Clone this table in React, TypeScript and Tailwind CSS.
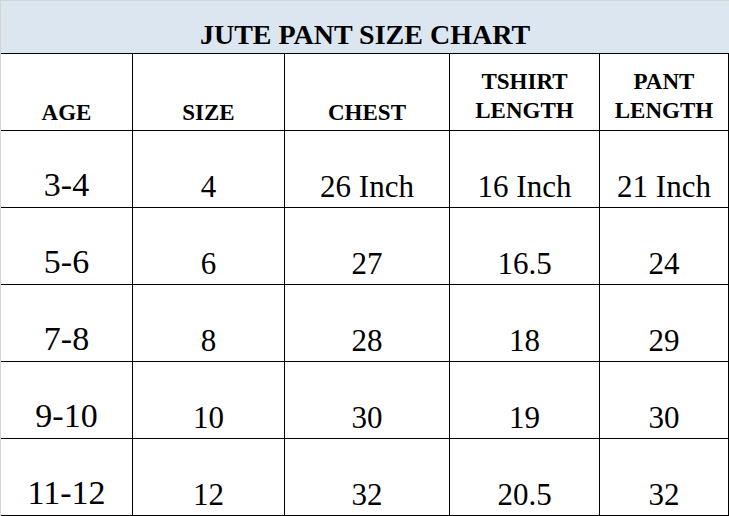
import React from 'react';

const rows = [
  ['3-4', '4', '26 Inch', '16 Inch', '21 Inch'],
  ['5-6', '6', '27', '16.5', '24'],
  ['7-8', '8', '28', '18', '29'],
  ['9-10', '10', '30', '19', '30'],
  ['11-12', '12', '32', '20.5', '32'],
];

const App = () => {
  return (
    <div
      className="w-[729px] h-[516px] bg-white text-black border-l border-t border-[#d4d4d4]"
      style={{ fontFamily: '"Liberation Serif", "Times New Roman", serif' }}
    >
      {/* Title band */}
      <div className="h-[53px] bg-[#dce6f1] border-b border-black flex items-end justify-center pb-[4px]">
        <span className="text-[28px] font-bold leading-none">JUTE PANT SIZE CHART</span>
      </div>

      <div className="grid grid-cols-[132px_152px_165px_150px_129px]">
        {/* Header row */}
        <div className="h-[77px] border-r border-b border-black flex items-end justify-center pb-[6px]">
          <span className="text-[23px] font-bold leading-none">AGE</span>
        </div>
        <div className="h-[77px] border-r border-b border-black flex items-end justify-center pb-[6px]">
          <span className="text-[23px] font-bold leading-none">SIZE</span>
        </div>
        <div className="h-[77px] border-r border-b border-black flex items-end justify-center pb-[6px]">
          <span className="text-[23px] font-bold leading-none">CHEST</span>
        </div>
        <div className="h-[77px] border-r border-b border-black flex items-end justify-center pb-[5px]">
          <span className="text-[23px] font-bold leading-[29px] text-center">
            TSHIRT
            <br />
            LENGTH
          </span>
        </div>
        <div className="h-[77px] border-r border-b border-black flex items-end justify-center pb-[5px]">
          <span className="text-[23px] font-bold leading-[29px] text-center">
            PANT
            <br />
            LENGTH
          </span>
        </div>

        {/* Data rows */}
        {rows.map((row) =>
          row.map((cell, i) => (
            <div
              key={row[0] + i}
              className="h-[77px] border-r border-b border-black flex items-end justify-center pb-[5px]"
            >
              <span className={i === 0 ? 'text-[34px] leading-none' : 'text-[31px] leading-none'}>
                {cell}
              </span>
            </div>
          ))
        )}
      </div>
    </div>
  );
};

export default App;
